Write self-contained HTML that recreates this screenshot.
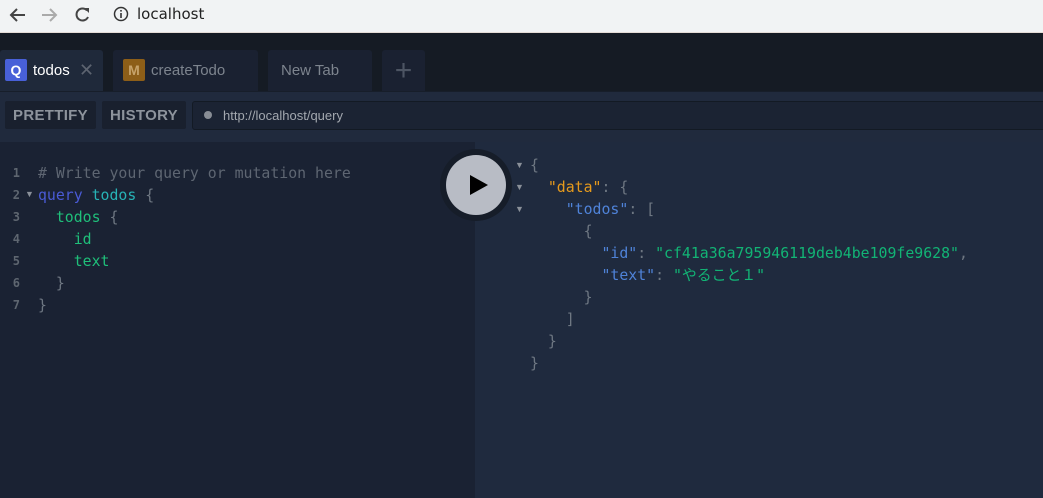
<!DOCTYPE html>
<html><head><meta charset="utf-8"><style>
*{margin:0;padding:0;box-sizing:border-box}
body{width:1043px;height:498px;overflow:hidden;background:#151b24;font-family:"Liberation Sans",sans-serif;position:relative}
.abs{position:absolute}
.bar{left:0;top:0;width:1043px;height:33px;background:#f1f3f4;border-bottom:1px solid #e4dcd6}
.tab{top:50px;height:41px;background:#1a2131;border-radius:3px 3px 0 0;color:#7d848e;font-size:15px;line-height:41px}
.badge{position:absolute;top:9px;width:22px;height:22px;border-radius:2px;color:#fff;font-weight:bold;font-size:14px;line-height:22px;text-align:center}
.tb{top:91px;left:0;width:1043px;height:51px;background:#202a3d;border-top:1px solid #171e2a}
.btn{top:101px;height:28px;background:#19202e;border-radius:2px;color:#8d939c;font-weight:bold;font-size:15px;line-height:29px;text-align:center;letter-spacing:.3px}
.mono{font-family:"DejaVu Sans Mono","Liberation Mono","Noto Sans CJK JP",monospace;font-size:14.85px;line-height:22px;white-space:pre}
.ln{color:#5e6670;font-size:12px;font-weight:bold;font-family:"DejaVu Sans Mono",monospace;width:20px;text-align:right;line-height:22px}
.c{color:#5e6672}.k{color:#4a5bd6}.d{color:#27b3b6}.f{color:#1fbf7a}.p{color:#6e7782}.o{color:#e69a1c}.b{color:#4f83d9}.s{color:#12b475}
.arr{color:#8a9099;font-size:9px}
</style></head><body>
<div class="abs bar">
<svg class="abs" style="left:8px;top:4px" width="90" height="22" viewBox="0 0 90 22">
<path d="M17 11H3M9 5L3 11l6 6" stroke="#444" stroke-width="2" fill="none"/>
<path d="M34 11h14M42 5l6 6-6 6" stroke="#aaa" stroke-width="2" fill="none"/>
<path d="M79 6.5A6 6 0 1 0 80 13" stroke="#444" stroke-width="2" fill="none"/><path d="M76 4h5v5z" fill="#444"/>
</svg>
<svg class="abs" style="left:113px;top:6px" width="16" height="16" viewBox="0 0 16 16"><circle cx="8" cy="8" r="6.5" stroke="#333" stroke-width="1.5" fill="none"/><rect x="7.2" y="7" width="1.6" height="5" fill="#333"/><rect x="7.2" y="4" width="1.6" height="1.6" fill="#333"/></svg>
<div class="abs" style="left:137px;top:5px;font-size:15px;color:#222;font-family:'DejaVu Sans',sans-serif">localhost</div>
</div>
<div class="abs tab" style="left:0;width:103px;background:#1f293a;color:#fff"><div class="badge" style="left:5px;background:#4860d8">Q</div><span class="abs" style="left:33px">todos</span><span class="abs" style="left:79px;color:#5d6470;font-size:18px">✕</span></div>
<div class="abs tab" style="left:113px;width:145px"><div class="badge" style="left:10px;background:#8d5e18;color:#c7a36b">M</div><span class="abs" style="left:38px">createTodo</span></div>
<div class="abs tab" style="left:268px;width:104px"><span class="abs" style="left:13px">New Tab</span></div>
<div class="abs tab" style="left:382px;width:43px;text-align:center;font-size:30px;color:#4d5563">+</div>
<div class="abs tb"></div>
<div class="abs btn" style="left:5px;width:91px">PRETTIFY</div>
<div class="abs btn" style="left:102px;width:84px">HISTORY</div>
<div class="abs" style="left:192px;top:101px;width:860px;height:29px;background:#1b2333;border:1px solid #131a24;border-radius:3px"></div>
<div class="abs" style="left:204px;top:111px;width:8px;height:8px;border-radius:50%;background:#888d95"></div>
<div class="abs" style="left:223px;top:108px;font-size:13px;color:#a3a8af">http://localhost/query</div>
<div class="abs" style="left:0;top:142px;width:475px;height:356px;background:#1a2233"></div>
<div class="abs" style="left:475px;top:142px;width:568px;height:356px;background:#1f2a3e"></div>
<div class="abs" style="left:0;top:162px">
<div class="ln">1</div><div class="ln">2</div><div class="ln">3</div><div class="ln">4</div><div class="ln">5</div><div class="ln">6</div><div class="ln">7</div></div>
<div class="abs arr" style="left:25px;top:189px">▼</div>
<div class="abs mono" style="left:38px;top:162px"><span class="c"># Write your query or mutation here</span>
<span class="k">query</span> <span class="d">todos</span> <span class="p">{</span>
  <span class="f">todos</span> <span class="p">{</span>
    <span class="f">id</span>
    <span class="f">text</span>
  <span class="p">}</span>
<span class="p">}</span></div>
<div class="abs" style="left:440px;top:149px;width:72px;height:72px;border-radius:50%;background:#161d29"></div>
<div class="abs" style="left:446px;top:155px;width:60px;height:60px;border-radius:50%;background:#b8bcc5"></div>
<svg class="abs" style="left:469px;top:174px" width="20" height="22"><path d="M1 1L19 11L1 21Z" fill="#000"/></svg>
<div class="abs arr" style="left:515px;top:160px">▼</div>
<div class="abs arr" style="left:515px;top:182px">▼</div>
<div class="abs arr" style="left:515px;top:204px">▼</div>
<div class="abs mono" style="left:530px;top:154px"><span class="p">{</span>
  <span class="o">"data"</span><span class="p">: {</span>
    <span class="b">"todos"</span><span class="p">: [</span>
      <span class="p">{</span>
        <span class="b">"id"</span><span class="p">: </span><span class="s">"cf41a36a795946119deb4be109fe9628"</span><span class="p">,</span>
        <span class="b">"text"</span><span class="p">: </span><span class="s">"やること１"</span>
      <span class="p">}</span>
    <span class="p">]</span>
  <span class="p">}</span>
<span class="p">}</span></div>
</body></html>
